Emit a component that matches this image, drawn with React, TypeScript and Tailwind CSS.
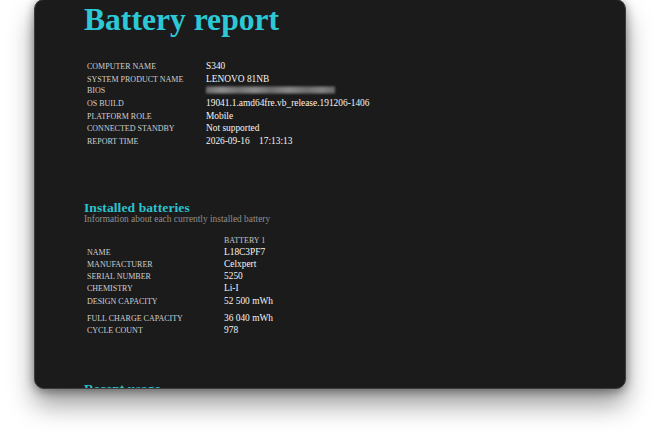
const serif = { fontFamily: '"Liberation Serif", "Times New Roman", serif' };

const systemInfo = [
  { label: "Computer name", value: "S340" },
  { label: "System product name", value: "LENOVO 81NB" },
  { label: "BIOS", value: null },
  { label: "OS build", value: "19041.1.amd64fre.vb_release.191206-1406" },
  { label: "Platform role", value: "Mobile" },
  { label: "Connected standby", value: "Not supported" },
  { label: "Report time", value: "2026-09-16\u00a0\u00a0\u00a0\u00a017:13:13" },
];

const batteryInfo = [
  { label: "Name", value: "L18C3PF7" },
  { label: "Manufacturer", value: "Celxpert" },
  { label: "Serial number", value: "5250" },
  { label: "Chemistry", value: "Li-I" },
  { label: "Design capacity", value: "52 500 mWh" },
];

const capacityInfo = [
  { label: "Full charge capacity", value: "36 040 mWh" },
  { label: "Cycle count", value: "978" },
];

function Row({ label, value, pitch, labelWidth }: { label: string; value: string | null; pitch: string; labelWidth: string }) {
  return (
    <div className={`flex items-baseline ${pitch}`}>
      <span className={`${labelWidth} shrink-0 text-[8px] uppercase text-[#d0d0d0]`}>{label}</span>
      {value === null ? (
        // blurred out BIOS version
        <span className="inline-block h-[7px] w-[129px] translate-y-[0.5px] bg-[linear-gradient(90deg,#6a6a6a_0%,#8c8c8c_12%,#707070_25%,#8a8a8a_38%,#6c6c6c_50%,#878787_64%,#6e6e6e_78%,#828282_90%,#666_100%)] blur-[1.2px]" />
      ) : (
        <span className="text-[9.4px] text-[#f4f4f4] whitespace-nowrap">{value}</span>
      )}
    </div>
  );
}

export default function App() {
  return (
    <div className="w-[660px] h-[432px] bg-white overflow-hidden" style={serif}>
      <div className="mx-[34px] mt-[-1px] h-[390px] rounded-[10px] bg-[#1b1b1b] border border-[#3c3c3c] overflow-hidden shadow-[0_16px_26px_rgba(0,0,0,0.38),0_3px_10px_rgba(0,0,0,0.3),0_0_12px_rgba(0,0,0,0.12)]">
        <div className="pl-[49px] pt-[4px]">
          <h1 className="text-[31.6px] leading-none font-bold text-[#2dc8d6]">Battery report</h1>

          <div className="mt-[24.5px] pl-[3px]">
            {systemInfo.map((r) => (
              <Row key={r.label} label={r.label} value={r.value} pitch="h-[12.45px] leading-[12.45px]" labelWidth="w-[119px]" />
            ))}
          </div>

          <h2 className="mt-[53.5px] text-[13.5px] leading-none font-bold tracking-[0.1px] text-[#2cc2ce]">Installed batteries</h2>
          <p className="mt-[0.5px] text-[9.4px] leading-none text-[#8e8e8e]">
            Information about each currently installed battery
          </p>

          <div className="mt-[10.5px] pl-[3px]">
            <div className="flex items-baseline h-[11px] leading-[11px]">
              <span className="w-[137px] shrink-0" />
              <span className="text-[8px] text-[#c4c4c4]">BATTERY 1</span>
            </div>
            {batteryInfo.map((r) => (
              <Row key={r.label} label={r.label} value={r.value} pitch="h-[12.3px] leading-[12.3px]" labelWidth="w-[137px]" />
            ))}
            <div className="mt-[4.7px]">
              {capacityInfo.map((r) => (
                <Row key={r.label} label={r.label} value={r.value} pitch="h-[12.3px] leading-[12.3px]" labelWidth="w-[137px]" />
              ))}
            </div>
          </div>

          <h2 className="mt-[46px] text-[13.5px] leading-none font-bold tracking-[0.1px] text-[#2cc2ce]">Recent usage</h2>
        </div>
      </div>
    </div>
  );
}
